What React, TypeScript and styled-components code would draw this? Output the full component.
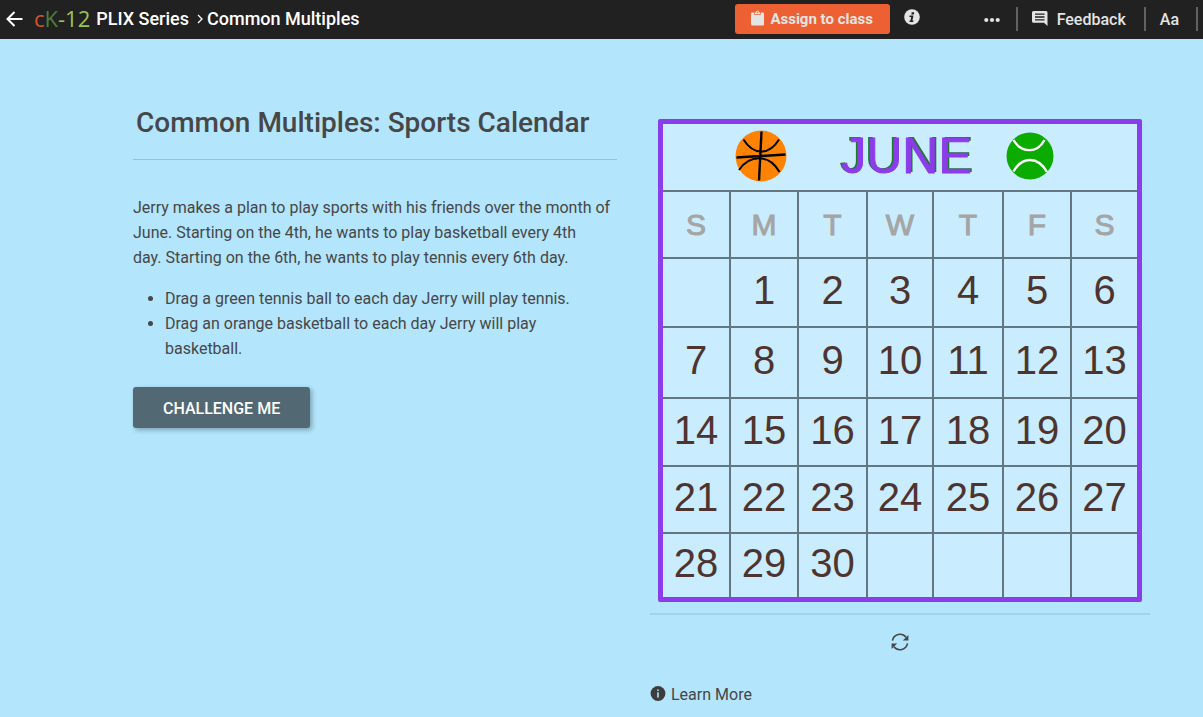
import React from "react";
import styled, { createGlobalStyle } from "styled-components";

const GlobalStyle = createGlobalStyle`
  *, *::before, *::after { box-sizing: border-box; }
  body {
    margin: 0;
    background: #b3e5fc;
    color: #474747;
    font-family: Roboto, "Open Sans", sans-serif;
    font-size: 16px;
    line-height: 25px;
  }
`;

const TopBar = styled.header`
  display: flex;
  align-items: center;
  justify-content: space-between;
  height: 39px;
  padding: 0 5px 2px;
  background: #212121;
  color: #e4e4e4;
  font-weight: 500;
`;

const BarGroup = styled.div`
  display: flex;
  align-items: center;
`;

const Crumbs = styled.nav`
  display: flex;
  align-items: center;
  color: #ffffff;
  font-size: 18px;
`;

const CrumbLink = styled.a`
  display: flex;
  align-items: center;
  color: inherit;
  text-decoration: none;
`;

const Logo = styled.a`
  margin: 0 6px 0 11px;
  font-family: "Open Sans", sans-serif;
  font-size: 22px;
  font-weight: 400;
  text-decoration: none;
`;

const LogoPart = styled.span<{ $color: string }>`
  color: ${(p) => p.$color};
`;

const Chevron = styled.svg`
  margin: 0 4px 0 8px;
`;

const AssignButton = styled.button`
  display: flex;
  align-items: center;
  justify-content: center;
  gap: 6px;
  width: 155px;
  height: 30px;
  padding: 0;
  border: 0;
  border-radius: 3px;
  background: #ec6033;
  color: #e4e4e4;
  font: 700 15px Roboto, sans-serif;
  cursor: pointer;
`;

const BarButton = styled.button<{ $start: number; $end: number }>`
  display: flex;
  align-items: center;
  gap: 9px;
  height: 24px;
  padding: 2px ${(p) => p.$end}px 0 ${(p) => p.$start}px;
  border: 0;
  background: none;
  color: #e4e4e4;
  font: 500 16px Roboto, sans-serif;
  cursor: pointer;
`;

const InfoButton = styled(BarButton)`
  padding-top: 0;
  padding-bottom: 3px;
`;

const BarRule = styled.span`
  width: 2px;
  height: 24px;
  background: #616161;
`;

const Content = styled.main`
  display: grid;
  grid-template-columns: 121fr 125fr;
  gap: 33px;
  align-items: start;
  padding: 63px 53px 0 133px;
`;

const Intro = styled.section`
  min-width: 0;
`;

const Title = styled.h1`
  margin: 0;
  padding: 1px 0 16px 3px;
  border-bottom: 1px solid #97c1d5;
  font-size: 28px;
  font-weight: 500;
  line-height: 40px;
`;

const Paragraph = styled.p`
  margin: 35px 0 16px;
`;

const Tasks = styled.ul`
  margin: 0 0 26px;
  padding: 0 0 0 32px;
`;

const ChallengeButton = styled.button`
  height: 41px;
  padding: 2px 30px 0;
  border: 0;
  border-radius: 3px;
  background: #526872;
  box-shadow: 2px 2px 5px rgba(0, 0, 0, 0.3);
  color: #ffffff;
  font: 500 16px Roboto, sans-serif;
  cursor: pointer;
`;

const Activity = styled.section`
  padding-top: 17px;
  min-width: 0;
`;

const BoardArea = styled.div`
  padding: 0 8px 11px;
  border-bottom: 2px solid #a4d3e8;
`;

const Calendar = styled.table`
  width: 100%;
  table-layout: fixed;
  border: 5px solid #8a3de8;
  border-collapse: separate;
  border-spacing: 0;
  border-radius: 2px;
  background: #c9edfe;
  font-family: "Liberation Sans", Arial, sans-serif;
  text-align: center;
`;

const Row = styled.tr<{ $height: number }>`
  height: ${(p) => p.$height}px;

  & > * {
    border: 0 solid #62777f;
    border-right-width: 2px;
    border-bottom-width: 2px;
  }
  & > *:last-child { border-right-width: 0; }
  tbody > &:last-child > * { border-bottom-width: 0; }
`;

const MonthCell = styled.th`
  padding: 0 0 3px;
`;

const DayName = styled.th`
  padding: 0;
  color: #a5a5a5;
  font-size: 30px;
  font-weight: 400;
  line-height: 34px;
  -webkit-text-stroke: 1px #a5a5a5;
`;

const DayCell = styled.td`
  padding: 0 0 5px;
  color: #4e342e;
  font-size: 40px;
  line-height: 44px;
`;

const MonthBar = styled.div`
  display: flex;
  align-items: center;
  justify-content: center;
  padding-right: 11px;
`;

const Month = styled.span`
  margin: 0 34px 0 54px;
  color: #8a3de8;
  font-size: 50px;
  font-weight: 400;
  line-height: 56px;
  -webkit-text-stroke: 1px #8a3de8;
`;

const ShadedLetters = styled.span<{ $shift: number }>`
  text-shadow: ${(p) => p.$shift}px -1px 0 #1b7a2e;
`;

const BoardControls = styled.div`
  display: flex;
  justify-content: center;
  padding: 18px 0 31px;
`;

const IconButton = styled.button`
  display: flex;
  padding: 0;
  border: 0;
  background: none;
  color: #474747;
  cursor: pointer;
`;

const LearnMore = styled.a`
  display: inline-flex;
  align-items: center;
  gap: 5px;
  color: #474747;
  text-decoration: none;
`;

const BackIcon = () => (
  <svg width="18" height="18" viewBox="0 0 18 18" fill="none" stroke="currentColor" strokeWidth="2">
    <path d="M17.500 9H3M9.500 2L2.500 9L9.500 16" />
  </svg>
);

const ClipboardIcon = () => (
  <svg width="13" height="18" viewBox="0 0 13 18" fill="currentColor">
    <path d="M1 2.500H3.200V4.800H9.800V2.500H12Q13 2.500 13 3.500V14.800Q13 15.500 12 15.500H1Q0 15.500 0 14.800V3.500Q0 2.500 1 2.500Z" />
    <path d="M3.900 4V2.200H4.900Q5.100 .5 6.500 .5T8.100 2.200H9.100V4Z M6.500 1.400A.8 .8 0 1 0 6.500 3A.8 .8 0 1 0 6.500 1.400Z" fillRule="evenodd" />
  </svg>
);

const InfoIcon = () => (
  <svg width="16" height="16" viewBox="0 0 16 16">
    <circle cx="8" cy="8" r="7.800" fill="currentColor" />
    <path d="M7.700 3.200H10.200L9.800 5.400H7.300ZM5.600 6.500H9.500L8.400 11.400H9.500L9.200 12.900H5.400L5.700 11.400H6.500L7.200 8H5.300Z" fill="#212121" />
  </svg>
);

const CommentIcon = () => (
  <svg width="16" height="18" viewBox="0 0 16 18">
    <path d="M1.500 0H14Q15.500 0 15.500 1.500V15L12 11.800H1.500Q0 11.800 0 10.300V1.500Q0 0 1.500 0Z" fill="currentColor" />
    <path d="M3 3.200H12.500M3 6H12.500M3 8.800H12.500" stroke="#212121" strokeWidth="1.300" />
  </svg>
);

const DotsIcon = () => (
  <svg width="16" height="6" viewBox="0 0 16 6" fill="currentColor">
    <circle cx="2.300" cy="3" r="2.100" />
    <circle cx="8" cy="3" r="2.100" />
    <circle cx="13.700" cy="3" r="2.100" />
  </svg>
);

const RefreshIcon = () => (
  <svg width="18" height="18" viewBox="0 0 18 18" fill="none" stroke="currentColor" strokeWidth="1.600">
    <path d="M1.500 7.600A7.600 7.600 0 0 1 15 4.300M16.500 10.400A7.600 7.600 0 0 1 3 13.700" />
    <path d="M17.400 2V7.600H11.800ZM.6 16V10.400H6.200Z" fill="currentColor" stroke="none" />
  </svg>
);

const LearnIcon = () => (
  <svg width="16" height="17" viewBox="0 0 16 17">
    <circle cx="8" cy="7.500" r="7.400" fill="#3d3d3d" />
    <path d="M7.200 3.500H8.800V5H7.200ZM7.200 6.200H8.800V11.500H7.200Z" fill="#b3e5fc" />
  </svg>
);

const Basketball = () => (
  <svg width="52" height="52" viewBox="0 0 52 52" fill="none" stroke="#000" strokeWidth="2">
    <circle cx="26" cy="26" r="25.500" fill="#ff8200" stroke="none" />
    <path d="M26.500 1.500L24 50.500M1.500 27.500L50.500 24.500" strokeWidth="2.400" />
    <path d="M8.500 9.500C18 25 34 26 44 9.500M4 40C14 25 34 23 44.500 42" />
  </svg>
);

const TennisBall = () => (
  <svg width="48" height="48" viewBox="0 0 48 48" fill="none" stroke="#fff" strokeWidth="2.400">
    <circle cx="24" cy="24" r="23.500" fill="#0cab00" stroke="none" />
    <path d="M7.500 8C15 21 31 22 38.500 8M7.500 39.500C16 24 32 24 41 40" />
  </svg>
);

const columnWidths = [68, 68, 69, 66, 70, 68, 65];
const dayNames = ["S", "M", "T", "W", "T", "F", "S"];
const weekHeights = [69, 71, 68, 67, 63];

const weeks = weekHeights.map((height, week) => ({
  height,
  days: dayNames.map((_, column) => {
    const day = week * 7 + column;
    return day >= 1 && day <= 30 ? day : null;
  }),
}));

export default function App() {
  return (
    <>
      <GlobalStyle />
      <TopBar>
        <Crumbs aria-label="Breadcrumb">
          <CrumbLink href="#back" aria-label="Back"><BackIcon /></CrumbLink>
          <Logo href="#home">
            <LogoPart $color="#d9532c">c</LogoPart>
            <LogoPart $color="#4b7f3a">K</LogoPart>
            <LogoPart $color="#9ac552">-12</LogoPart>
          </Logo>
          <CrumbLink href="#series">PLIX Series</CrumbLink>
          <Chevron width="6" height="10" viewBox="0 0 6 10" fill="none" stroke="currentColor" strokeWidth="1.300">
            <path d="M1 1L5 5L1 9" />
          </Chevron>
          <span>Common Multiples</span>
        </Crumbs>
        <BarGroup>
          <AssignButton type="button"><ClipboardIcon />Assign to class</AssignButton>
          <InfoButton $start={14} $end={14} type="button" aria-label="Information"><InfoIcon /></InfoButton>
          <BarButton $start={50} $end={16} type="button" aria-label="More"><DotsIcon /></BarButton>
          <BarRule />
          <BarButton $start={14} $end={18} type="button"><CommentIcon />Feedback</BarButton>
          <BarRule />
          <BarButton $start={14} $end={17} type="button">Aa</BarButton>
          <BarRule />
        </BarGroup>
      </TopBar>
      <Content>
        <Intro>
          <Title>Common Multiples: Sports Calendar</Title>
          <Paragraph>
            Jerry makes a plan to play sports with his friends over the month of June. Starting on
            the 4th, he wants to play basketball every 4th
            <br />
            day. Starting on the 6th, he wants to play tennis every 6th day.
          </Paragraph>
          <Tasks>
            <li>Drag a green tennis ball to each day Jerry will play tennis.</li>
            <li>Drag an orange basketball to each day Jerry will play basketball.</li>
          </Tasks>
          <ChallengeButton type="button">CHALLENGE ME</ChallengeButton>
        </Intro>
        <Activity>
          <BoardArea>
            <Calendar>
              <colgroup>
                {columnWidths.map((width, i) => (
                  <col key={i} width={width} />
                ))}
              </colgroup>
              <thead>
                <Row $height={68}>
                  <MonthCell colSpan={7}>
                    <MonthBar>
                      <Basketball />
                      <Month>
                        <ShadedLetters $shift={-2}>JU</ShadedLetters>
                        <ShadedLetters $shift={2}>NE</ShadedLetters>
                      </Month>
                      <TennisBall />
                    </MonthBar>
                  </MonthCell>
                </Row>
                <Row $height={67}>
                  {dayNames.map((name, i) => (
                    <DayName key={i} scope="col">{name}</DayName>
                  ))}
                </Row>
              </thead>
              <tbody>
                {weeks.map((week, i) => (
                  <Row key={i} $height={week.height}>
                    {week.days.map((day, j) => (
                      <DayCell key={j}>{day}</DayCell>
                    ))}
                  </Row>
                ))}
              </tbody>
            </Calendar>
          </BoardArea>
          <BoardControls>
            <IconButton type="button" aria-label="Reset"><RefreshIcon /></IconButton>
          </BoardControls>
          <LearnMore href="#learn-more"><LearnIcon />Learn More</LearnMore>
        </Activity>
      </Content>
    </>
  );
}
